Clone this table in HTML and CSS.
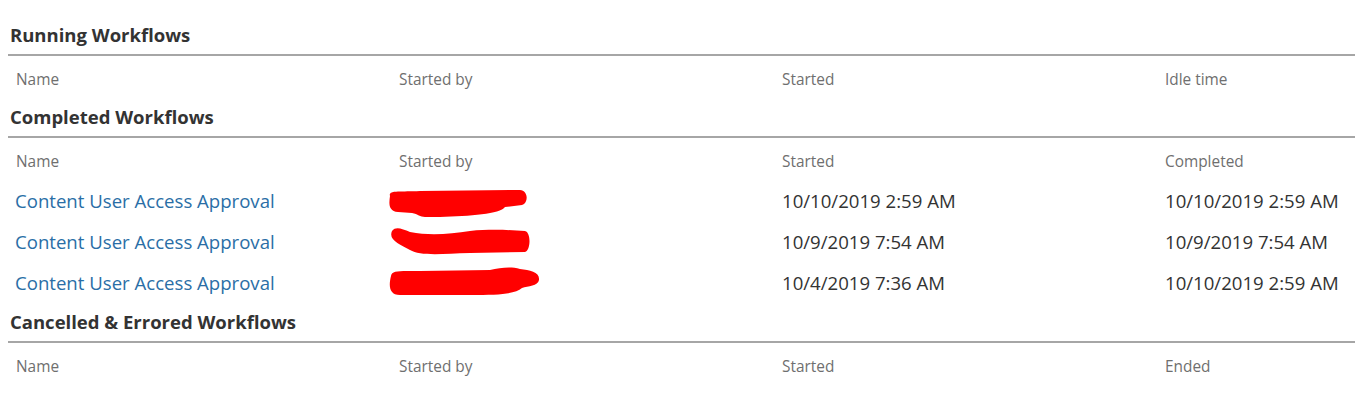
FILE: index.html
```html
<!DOCTYPE html>
<html lang="en">
<head>
    <meta charset="UTF-8">
    <meta name="viewport" content="width=device-width, initial-scale=1.0">
    <title>Workflows</title>
    <link rel="stylesheet" href="styles.css">
</head>
<body>
    <div class="workflows">
        <section class="wf-section">
            <h2 class="wf-title">Running Workflows</h2>
            <div class="wf-table">
                <div class="wf-row wf-head">
                    <div class="wf-cell">Name</div>
                    <div class="wf-cell">Started by</div>
                    <div class="wf-cell">Started</div>
                    <div class="wf-cell">Idle time</div>
                </div>
            </div>
        </section>

        <section class="wf-section">
            <h2 class="wf-title">Completed Workflows</h2>
            <div class="wf-table">
                <div class="wf-row wf-head">
                    <div class="wf-cell">Name</div>
                    <div class="wf-cell">Started by</div>
                    <div class="wf-cell">Started</div>
                    <div class="wf-cell">Completed</div>
                </div>
                <div class="wf-row">
                    <div class="wf-cell"><a href="#" class="wf-link">Content User Access Approval</a></div>
                    <div class="wf-cell">
                        <svg class="redact" width="160" height="41" viewBox="0 0 160 41">
                            <path d="M4,16 C2,10 14,12 34,11 L134,10 C142,10 143,23 136,25 L119,27 C114,34 84,36 54,37 L39,37 C34,37 32,34 26,33 L12,32 C2,31 3,23 4,16 Z" />
                        </svg>
                    </div>
                    <div class="wf-cell">10/10/2019 2:59 AM</div>
                    <div class="wf-cell">10/10/2019 2:59 AM</div>
                </div>
                <div class="wf-row">
                    <div class="wf-cell"><a href="#" class="wf-link">Content User Access Approval</a></div>
                    <div class="wf-cell">
                        <svg class="redact" width="160" height="41" viewBox="0 0 160 41">
                            <path d="M6,10 C10,5 16,8 24,11 C44,15 64,13 84,10 C104,8 124,9 139,10 C145,11 145,29 139,31 L84,32 C54,33 34,35 24,29 C14,23 2,19 6,10 Z" />
                        </svg>
                    </div>
                    <div class="wf-cell">10/9/2019 7:54 AM</div>
                    <div class="wf-cell">10/9/2019 7:54 AM</div>
                </div>
                <div class="wf-row">
                    <div class="wf-cell"><a href="#" class="wf-link">Content User Access Approval</a></div>
                    <div class="wf-cell">
                        <svg class="redact" width="160" height="41" viewBox="0 0 160 41">
                            <path d="M5,14 C6,8 14,9 34,9 L104,8 C114,6 124,4 134,7 C144,8 154,10 153,18 C152,24 142,24 136,26 C129,32 114,33 84,33 L14,33 C2,33 3,22 5,14 Z" />
                        </svg>
                    </div>
                    <div class="wf-cell">10/4/2019 7:36 AM</div>
                    <div class="wf-cell">10/10/2019 2:59 AM</div>
                </div>
            </div>
        </section>

        <section class="wf-section">
            <h2 class="wf-title">Cancelled &amp; Errored Workflows</h2>
            <div class="wf-table">
                <div class="wf-row wf-head">
                    <div class="wf-cell">Name</div>
                    <div class="wf-cell">Started by</div>
                    <div class="wf-cell">Started</div>
                    <div class="wf-cell">Ended</div>
                </div>
            </div>
        </section>
    </div>
</body>
</html>
```

FILE: styles.css
```css
body {
    margin: 0;
    background-color: #fff;
    font-family: 'Open Sans', sans-serif;
    color: #333;
}

.workflows {
    padding: 16px 0 0 8px;
}

.wf-title {
    margin: 0;
    height: 38px;
    line-height: 38px;
    padding-left: 2px;
    font-size: 18.5px;
    font-weight: 700;
    color: #333;
    border-bottom: 2px solid #a6a6a6;
}

.wf-row {
    display: grid;
    grid-template-columns: 383px 383px 383px 1fr;
    height: 41px;
    align-items: center;
    font-size: 18.6px;
    color: #333;
}

.wf-head {
    height: 42px;
    padding-top: 4px;
    box-sizing: border-box;
    font-size: 15.4px;
    color: #6f6f6f;
}

.wf-cell {
    padding-left: 8px;
    white-space: nowrap;
}

.wf-link {
    margin-left: -1px;
    color: #2a6ea6;
    text-decoration: none;
}

.redact {
    display: block;
    margin-left: -13px;
    fill: #f00;
}
```
